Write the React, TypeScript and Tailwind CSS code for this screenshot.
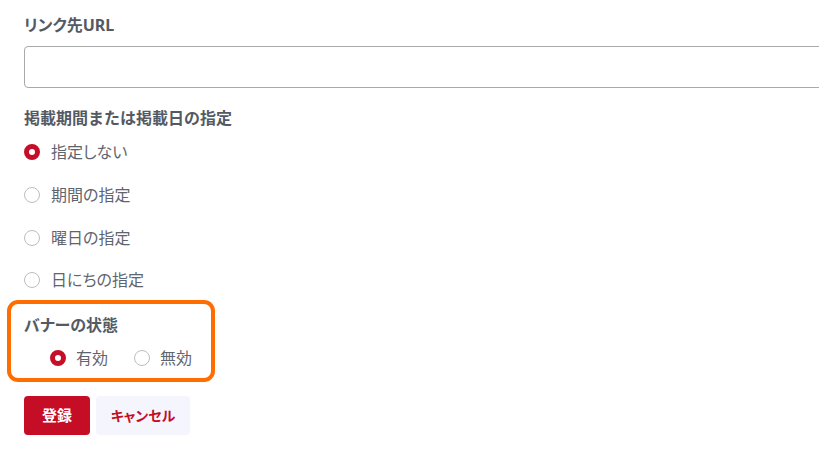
import React from "react";

const font = "font-['Noto_Sans','Noto_Sans_CJK_JP',sans-serif]";

function Radio({ checked }: { checked?: boolean }) {
  return checked ? (
    <span className="box-border inline-block h-4 w-4 shrink-0 rounded-full border-[5px] border-[#c50f28] bg-white" />
  ) : (
    <span className="box-border inline-block h-4 w-4 shrink-0 rounded-full border-[1.5px] border-[#bdbdbd] bg-white" />
  );
}

function Option({ label, checked }: { label: string; checked?: boolean }) {
  return (
    <div className="flex h-[42.67px] items-center gap-[11px]">
      <Radio checked={checked} />
      <span className="text-[16px] leading-6 text-[#5f6570] [font-feature-settings:'palt']">{label}</span>
    </div>
  );
}

export default function App() {
  return (
    <div className={`${font} min-h-[452px] w-[819px] overflow-hidden bg-white pl-6 pt-[13px]`}>
      <div className="text-[16px] font-bold leading-6 text-[#545a64] [font-feature-settings:'palt']">リンク先URL</div>
      <div className="mt-[9px] h-[42px] w-[820px] rounded-[4px] border border-[#a9a9a9] bg-white" />
      <div className="mt-[18px] text-[16px] font-bold leading-6 text-[#545a64]">掲載期間または掲載日の指定</div>
      <div className="mt-[1px] flex flex-col">
        <Option label="指定しない" checked />
        <Option label="期間の指定" />
        <Option label="曜日の指定" />
        <Option label="日にちの指定" />
      </div>
      <div className="ml-[-17px] mt-[-2px] box-border h-[82px] w-[208px] rounded-[11px] border-4 border-[#ff6d00] pl-[13px] pt-[9px]">
        <div className="text-[16px] font-bold leading-6 text-[#545a64] [font-feature-settings:'palt']">バナーの状態</div>
        <div className="ml-[26px] mt-[9px] flex items-center">
          <Radio checked />
          <span className="ml-[10px] text-[16px] leading-6 text-[#5f6570]">有効</span>
          <span className="ml-[26px] flex"><Radio /></span>
          <span className="ml-[10px] text-[16px] leading-6 text-[#5f6570]">無効</span>
        </div>
      </div>
      <div className="mt-[14px] flex gap-[6px]">
        <button className="h-[39px] w-[66px] rounded-[4px] bg-[#c50d26] text-[15px] font-bold text-white [font-feature-settings:'palt']">登録</button>
        <button className="h-[39px] w-[94px] rounded-[4px] bg-[#f4f5fd] text-[14px] font-bold text-[#c50d26] [font-feature-settings:'palt']">キャンセル</button>
      </div>
    </div>
  );
}
